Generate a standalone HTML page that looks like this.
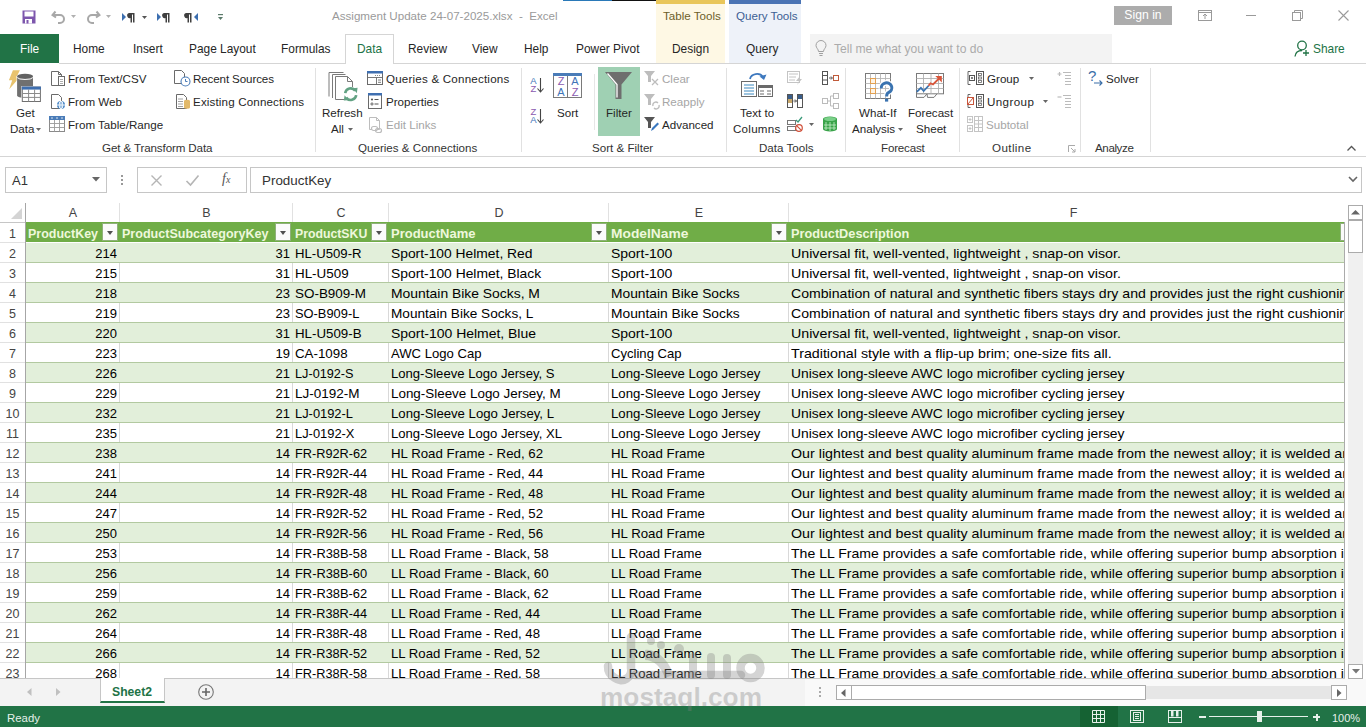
<!DOCTYPE html>
<html><head><meta charset="utf-8">
<style>
*{box-sizing:border-box;margin:0;padding:0}
html,body{width:1366px;height:727px;overflow:hidden;background:#fff;font-family:"Liberation Sans",sans-serif;color:#262626}
.a{position:absolute;white-space:nowrap}
.t{font-size:11.6px;color:#262626;line-height:14px}
.g{color:#a6a6a6}
.tab{position:absolute;top:41px;font-size:11.9px;line-height:16px;color:#262626}
.glabel{position:absolute;top:141px;font-size:11.6px;line-height:14px;color:#333}
.sep{position:absolute;top:68px;width:1px;height:84px;background:#e1e1e1}
svg{position:absolute;overflow:visible}
/* grid */
.colh{position:absolute;top:203px;height:19px;font-size:12.5px;line-height:19px;color:#444;text-align:center}
.rh{position:absolute;left:0;width:25px;height:20px;padding-top:1px;font-size:12.5px;line-height:20px;color:#444;text-align:center;border-bottom:1px solid #e1e1e1}
.cn,.cl{height:19px;font-size:13px;line-height:20px;color:#000;overflow:hidden}
.cn{text-align:right}
.hc{height:19px;font-weight:bold;font-size:12.5px;line-height:20px;color:#eef8dc;overflow:hidden}
.fb{position:absolute;top:1px;width:16px;height:18px;border:1px solid #8fb07a;background:#fbfbfb}
.fb:after{content:"";position:absolute;left:4px;top:7px;border-left:3.5px solid transparent;border-right:3.5px solid transparent;border-top:4px solid #505050}
</style></head><body>
<!-- TITLE BAR -->
<svg style="left:22px;top:10px" width="14" height="14" viewBox="0 0 14 14"><path d="M0.5 0.5h13v13h-13z" fill="#7d56ad"/><rect x="2.5" y="1.5" width="9" height="5" fill="#fff"/><rect x="3" y="9" width="7" height="4.5" fill="#fff"/><rect x="4.5" y="10" width="2" height="3.5" fill="#7d56ad"/></svg>
<svg style="left:51px;top:10px" width="16" height="14" viewBox="0 0 16 14"><path d="M4.5 1.5 L1.5 5 L5 7.5" fill="none" stroke="#a8a8a8" stroke-width="2"/><path d="M2 5 H9 A4 4 0 0 1 9 13 H7" fill="none" stroke="#a8a8a8" stroke-width="2"/></svg>
<svg style="left:71px;top:15px" width="6" height="4"><path d="M0 0H5L2.5 3Z" fill="#b0b0b0"/></svg>
<svg style="left:86px;top:10px" width="16" height="14" viewBox="0 0 16 14"><path d="M10.5 1.5 L13.5 5 L10 7.5" fill="none" stroke="#a8a8a8" stroke-width="2"/><path d="M13 5 H6 A4 4 0 0 0 6 13 H8" fill="none" stroke="#a8a8a8" stroke-width="2"/></svg>
<svg style="left:106px;top:15px" width="6" height="4"><path d="M0 0H5L2.5 3Z" fill="#b0b0b0"/></svg>
<svg style="left:122px;top:12px" width="13" height="11" viewBox="0 0 13 11"><path d="M0 1 L4 5 L0 9Z" fill="#3c6fb0"/><path d="M7 1 H12.5 V10.5 H11 V2.5 H10 V10.5 H8.5 V6 A2.6 2.6 0 0 1 7 1Z" fill="#404040"/></svg>
<svg style="left:142px;top:16px" width="6" height="4"><path d="M0 0H5L2.5 3Z" fill="#555"/></svg>
<svg style="left:157px;top:12px" width="13" height="11" viewBox="0 0 13 11"><path d="M0 1 L4 5 L0 9Z" fill="#3c6fb0"/><path d="M7 1 H12.5 V10.5 H11 V2.5 H10 V10.5 H8.5 V6 A2.6 2.6 0 0 1 7 1Z" fill="#404040"/></svg>
<svg style="left:186px;top:12px" width="13" height="11" viewBox="0 0 13 11"><path d="M0 1 H5.5 V10.5 H4 V2.5 H3 V10.5 H1.5 V6 A2.6 2.6 0 0 1 0 1Z" fill="#404040"/><path d="M12 1 L8 5 L12 9Z" fill="#3c6fb0"/></svg>
<svg style="left:218px;top:13px" width="6" height="9"><rect x="0" y="1" width="5" height="1.2" fill="#5a7a6a"/><path d="M0 4H5L2.5 7Z" fill="#5a7a6a"/></svg>
<div class="a" style="left:332px;top:9px;font-size:11.6px;line-height:14px;color:#9a9a9a">Assigment Update 24-07-2025.xlsx&nbsp; - &nbsp;Excel</div>
<div class="a" style="left:563px;top:0;width:49px;height:1px;background:#2a79b8"></div>
<div class="a" style="left:612px;top:0;width:44px;height:1px;background:#111"></div>
<div class="a" style="left:656px;top:0;width:69px;height:63px;background:#fef8e4"></div>
<div class="a" style="left:656px;top:0;width:69px;height:4px;background:#e9c65a"></div>
<div class="a" style="left:663px;top:9px;font-size:11.6px;line-height:14px;color:#6d5f2a">Table Tools</div>
<div class="a" style="left:729px;top:0;width:72px;height:63px;background:#eef2f9"></div>
<div class="a" style="left:729px;top:0;width:72px;height:4px;background:#4a74b5"></div>
<div class="a" style="left:736px;top:9px;font-size:11.6px;line-height:14px;color:#3d5f94">Query Tools</div>
<div class="a" style="left:1114px;top:6px;width:58px;height:19px;background:#acacac;color:#fff;font-size:12.2px;line-height:19px;text-align:center">Sign in</div>
<svg style="left:1198px;top:10px" width="14" height="11" viewBox="0 0 14 11"><rect x="0.5" y="0.5" width="13" height="10" fill="none" stroke="#9a9a9a"/><rect x="0.5" y="0.5" width="13" height="2" fill="none" stroke="#9a9a9a"/><path d="M7 9V4 M5 6 L7 4 L9 6" fill="none" stroke="#9a9a9a"/></svg>
<div class="a" style="left:1246px;top:15px;width:10px;height:1px;background:#9a9a9a"></div>
<svg style="left:1292px;top:10px" width="11" height="11" viewBox="0 0 11 11"><rect x="0.5" y="2.5" width="8" height="8" fill="none" stroke="#9a9a9a"/><path d="M2.5 2.5V0.5H10.5V8.5H8.5" fill="none" stroke="#9a9a9a"/></svg>
<svg style="left:1338px;top:10px" width="11" height="11" viewBox="0 0 11 11"><path d="M0.5 0.5L10.5 10.5M10.5 0.5L0.5 10.5" stroke="#9a9a9a" stroke-width="1.1"/></svg>
<!-- TABS ROW -->
<div class="a" style="left:0;top:34px;width:59px;height:29px;background:#217346"></div>
<div class="tab" style="left:20px;color:#fff">File</div>
<div class="a" style="left:59px;top:63px;width:1307px;height:1px;background:#d5d5d5"></div>
<div class="a" style="left:345px;top:34px;width:49px;height:30px;background:#fff;border:1px solid #d5d5d5;border-bottom:none"></div>
<div class="tab" style="left:73px">Home</div>
<div class="tab" style="left:133px">Insert</div>
<div class="tab" style="left:189px">Page Layout</div>
<div class="tab" style="left:281px">Formulas</div>
<div class="tab" style="left:357px;color:#217346">Data</div>
<div class="tab" style="left:408px">Review</div>
<div class="tab" style="left:472px">View</div>
<div class="tab" style="left:524px">Help</div>
<div class="tab" style="left:576px">Power Pivot</div>
<div class="tab" style="left:672px">Design</div>
<div class="tab" style="left:746px">Query</div>
<div class="a" style="left:810px;top:34px;width:302px;height:29px;background:#f3f3f3"></div>
<svg style="left:815px;top:40px" width="12" height="17" viewBox="0 0 12 17"><path d="M3.5 11.5 C3.5 9 1 8 1 5.5 A5 5 0 0 1 11 5.5 C11 8 8.5 9 8.5 11.5Z" fill="none" stroke="#a0a0a0"/><path d="M4 13.5H8M4.5 15.5H7.5" stroke="#a0a0a0"/></svg>
<div class="a" style="left:834px;top:41px;font-size:12.1px;line-height:16px;color:#ababab">Tell me what you want to do</div>
<svg style="left:1294px;top:40px" width="16" height="17" viewBox="0 0 16 17"><circle cx="8" cy="5.5" r="4.3" fill="none" stroke="#217346" stroke-width="1.3"/><path d="M1 16.5 C1.5 12 4 10.5 8 10.5" fill="none" stroke="#217346" stroke-width="1.3"/><path d="M12 10V16M9 13H15" stroke="#217346" stroke-width="1.3"/></svg>
<div class="tab" style="left:1313px;color:#217346">Share</div>
<!-- RIBBON -->
<div class="a" style="left:0;top:156px;width:1366px;height:1px;background:#d5d5d5"></div>
<div class="sep" style="left:315px"></div>
<div class="sep" style="left:521px"></div>
<div class="sep" style="left:726px"></div>
<div class="sep" style="left:845px"></div>
<div class="sep" style="left:959px"></div>
<div class="sep" style="left:1080px"></div>
<div class="sep" style="left:1150px"></div>
<div class="a" style="left:594px;top:74px;width:1px;height:56px;background:#e6e6e6"></div>
<!-- Get & Transform -->
<svg style="left:8px;top:70px" width="34" height="33" viewBox="0 0 34 33"><path d="M4.9 0.3 H11.9 L8.3 7.4 H11.5 L1.2 19.2 L4.2 10.2 H0.9Z" fill="#e8c36e"/><path d="M8.6 6.5 V25.5 A8.45 2.9 0 0 0 25.5 25.5 V6.5 A8.45 2.9 0 0 0 8.6 6.5Z" fill="#fff"/><path d="M9.1 6.5 V25.5 A7.95 2.4 0 0 0 25 25.5 V6.5Z" fill="#707070"/><ellipse cx="17.05" cy="6.3" rx="7.95" ry="2.5" fill="#626262"/><path d="M9.3 7.6 A7.9 2.3 0 0 0 24.8 7.6" fill="none" stroke="#fff" stroke-width="1"/><rect x="13.3" y="16.1" width="20.1" height="16.4" fill="#fff"/><rect x="14.3" y="17.1" width="18.1" height="14.4" fill="#fff" stroke="#707070"/><rect x="13.8" y="16.6" width="19.1" height="3" fill="#3f6fb0"/><path d="M14.3 23.5H32.4M14.3 27.4H32.4M20.6 19.5V31.5M26.6 19.5V31.5" stroke="#8a8a8a"/></svg>
<div class="a t" style="left:16px;top:106px">Get</div>
<div class="a t" style="left:10px;top:122px">Data</div>
<svg style="left:36px;top:128px" width="5" height="3"><path d="M0 0H5L2.5 3Z" fill="#666"/></svg>
<svg style="left:51px;top:71px" width="15" height="16" viewBox="0 0 15 16"><path d="M0.5 0.5H7.5L10.5 3.5V14.5H0.5Z" fill="#fff" stroke="#6a6a6a"/><path d="M7.5 0.5V3.5H10.5" fill="none" stroke="#6a6a6a"/><rect x="7.5" y="5.5" width="6" height="9" fill="#fff" stroke="#6a6a6a"/><path d="M9 8.5H12M9 10.5H12M9 12.5H12" stroke="#8a8a8a" stroke-width="0.7"/></svg>
<div class="a t" style="left:68px;top:72px">From Text/CSV</div>
<svg style="left:51px;top:94px" width="15" height="16" viewBox="0 0 15 16"><path d="M0.5 0.5H7.5L10.5 3.5V14.5H0.5Z" fill="#fff" stroke="#6a6a6a"/><circle cx="10" cy="11" r="4" fill="#4d8ac8"/><path d="M6 11H14M10 7V15" stroke="#fff" stroke-width="0.9"/><ellipse cx="10" cy="11" rx="1.8" ry="4" fill="none" stroke="#fff" stroke-width="0.9"/></svg>
<div class="a t" style="left:68px;top:95px">From Web</div>
<svg style="left:49px;top:116px" width="16" height="16" viewBox="0 0 16 16"><rect x="0.5" y="0.5" width="15" height="15" fill="#fff" stroke="#8a8a8a"/><rect x="0" y="0" width="16" height="4" fill="#4a7cb8"/><path d="M2 2H4M7 2H9M12 2H14" stroke="#fff" stroke-width="0.8"/><path d="M0.5 7.5H15.5M0.5 11.5H15.5M5.5 4V15.5M10.5 4V15.5" stroke="#9a9a9a" stroke-width="0.9"/></svg>
<div class="a t" style="left:68px;top:118px">From Table/Range</div>
<svg style="left:174px;top:70px" width="17" height="17" viewBox="0 0 17 17"><path d="M0.5 0.5H7.5L10.5 3.5V13.5H0.5Z" fill="#fff" stroke="#6a6a6a"/><circle cx="11.5" cy="11.5" r="4.5" fill="#fff" stroke="#4a7cb8" stroke-width="1.1"/><path d="M11.5 9V11.5H13.5" fill="none" stroke="#4a7cb8"/></svg>
<div class="a t" style="left:193px;top:72px;letter-spacing:-0.12px">Recent Sources</div>
<svg style="left:176px;top:94px" width="15" height="15" viewBox="0 0 15 15"><path d="M0.5 0.5H7.5L10.5 3.5V14.5H0.5Z" fill="#fff" stroke="#6a6a6a"/><path d="M2 5H7M2 7.5H7M2 10H7M2 12.5H7" stroke="#8a8a8a" stroke-width="0.8"/><path d="M8 7 A3 1.3 0 0 1 14 7 V13.5 A3 1.3 0 0 1 8 13.5Z" fill="#e2b96a"/></svg>
<div class="a t" style="left:193px;top:95px;letter-spacing:0.15px">Existing Connections</div>
<div class="glabel" style="left:102px;letter-spacing:-0.12px">Get &amp; Transform Data</div>
<!-- Queries & Connections -->
<svg style="left:328px;top:72px" width="31" height="30" viewBox="0 0 31 30"><path d="M1 24.5V0.5H15.5" fill="none" stroke="#7a7a7a"/><path d="M4.5 26V2.5H17.5" fill="none" stroke="#7a7a7a"/><path d="M7.5 27.5V4.5H19.5L24.5 9.5V27.5Z" fill="#fff" stroke="#7a7a7a"/><path d="M19.5 4.5V9.5H24.5" fill="none" stroke="#7a7a7a"/><circle cx="22.7" cy="22.2" r="7.5" fill="#fff"/><path d="M17.2 21.2 A5.5 5.5 0 0 1 27.2 18.8" fill="none" stroke="#62a283" stroke-width="2.6"/><path d="M28.2 23.2 A5.5 5.5 0 0 1 18.2 25.6" fill="none" stroke="#62a283" stroke-width="2.6"/><path d="M24.8 16.2L29.6 15.8L28.8 21.2Z" fill="#62a283"/><path d="M20.6 28.2L15.8 28.6L16.6 23.2Z" fill="#62a283"/></svg>
<div class="a t" style="left:322px;top:106px">Refresh</div>
<div class="a t" style="left:331px;top:122px">All</div>
<svg style="left:348px;top:128px" width="5" height="3"><path d="M0 0H5L2.5 3Z" fill="#666"/></svg>
<svg style="left:367px;top:71px" width="16" height="14" viewBox="0 0 16 14"><rect x="0.5" y="0.5" width="15" height="13" fill="#fff" stroke="#6a6a6a"/><rect x="0" y="0" width="16" height="2.5" fill="#3f6fb0"/><path d="M0.5 6.5H15.5M9.5 6.5V13.5" stroke="#6a6a6a" stroke-width="0.9"/><path d="M8 4.5H9M10 4.5H11M12 4.5H13" stroke="#6a6a6a" stroke-width="0.8"/><path d="M11 9H14M11 11.3H14" stroke="#6a6a6a" stroke-width="0.9"/></svg>
<div class="a t" style="left:386px;top:72px;letter-spacing:0.2px">Queries &amp; Connections</div>
<svg style="left:368px;top:93px" width="15" height="16" viewBox="0 0 15 16"><rect x="0.5" y="0.5" width="13" height="15" fill="#fff" stroke="#6a6a6a"/><rect x="0" y="0" width="14" height="2.5" fill="#3f6fb0"/><circle cx="4" cy="6.5" r="1.1" fill="#555"/><circle cx="4" cy="11" r="1.1" fill="none" stroke="#555" stroke-width="0.9"/><path d="M6.5 6.5H10.5M6.5 11H10.5" stroke="#555"/></svg>
<div class="a t" style="left:386px;top:95px">Properties</div>
<svg style="left:369px;top:117px" width="14" height="16" viewBox="0 0 14 16"><path d="M0.5 0.5H7.5L10.5 3.5V12.5H0.5Z" fill="#fff" stroke="#bdbdbd"/><path d="M7.5 0.5V3.5H10.5" fill="none" stroke="#bdbdbd"/><rect x="2.5" y="9.5" width="6" height="4" rx="2" fill="#fff" stroke="#bdbdbd" stroke-width="1.2"/><rect x="6.5" y="11.5" width="6" height="4" rx="2" fill="none" stroke="#bdbdbd" stroke-width="1.2"/></svg>
<div class="a t g" style="left:386px;top:118px">Edit Links</div>
<div class="glabel" style="left:358px">Queries &amp; Connections</div>
<!-- Sort & Filter -->
<div class="a" style="left:529px;top:77px;font-size:9.5px;line-height:8px;color:#3e74b8;width:9px;text-align:center">A<br><span style="color:#8a5ab0">Z</span></div>
<svg style="left:537px;top:78px" width="7" height="15"><path d="M3.5 0V14M0.5 10.5L3.5 14L6.5 10.5" fill="none" stroke="#444" stroke-width="1.1"/></svg>
<div class="a" style="left:529px;top:108px;font-size:9.5px;line-height:8px;color:#8a5ab0;width:9px;text-align:center">Z<br><span style="color:#3e74b8">A</span></div>
<svg style="left:537px;top:109px" width="7" height="15"><path d="M3.5 0V14M0.5 10.5L3.5 14L6.5 10.5" fill="none" stroke="#444" stroke-width="1.1"/></svg>
<svg style="left:553px;top:73px" width="29" height="25" viewBox="0 0 29 25"><rect x="0.5" y="0.5" width="28" height="24" fill="#fff" stroke="#7a7a7a"/><rect x="0" y="0" width="29" height="3" fill="#4a7cb8"/><path d="M14.5 3V24.5" stroke="#7a7a7a"/></svg>
<div class="a" style="left:554px;top:76px;width:14px;font-size:11px;line-height:10.5px;text-align:center;color:#8a5ab0">Z<br><span style="color:#3e74b8">A</span></div>
<div class="a" style="left:568px;top:76px;width:14px;font-size:11px;line-height:10.5px;text-align:center;color:#3e74b8">A<br><span style="color:#8a5ab0">Z</span></div>
<div class="a t" style="left:557px;top:106px">Sort</div>
<div class="a" style="left:598px;top:67px;width:42px;height:69px;background:#9fd0b3"></div>
<svg style="left:605px;top:72px" width="28" height="28" viewBox="0 0 28 28"><path d="M0 0H27L16.5 12.5V27H10.5V12.5Z" fill="#6e6e6e"/><path d="M2.5 1.5L12 12.5V25.5" fill="none" stroke="#fff" stroke-width="1.3"/></svg>
<div class="a t" style="left:606px;top:106px">Filter</div>
<svg style="left:644px;top:71px" width="15" height="15" viewBox="0 0 15 15"><path d="M0 0H11L7 5V11H4V5Z" fill="#bdbdbd"/><path d="M8 8L14 14M14 8L8 14" stroke="#bdbdbd" stroke-width="1.3"/></svg>
<div class="a t g" style="left:662px;top:72px">Clear</div>
<svg style="left:644px;top:94px" width="16" height="15" viewBox="0 0 16 15"><path d="M0 0H11L7 5V11H4V5Z" fill="#bdbdbd"/><path d="M9 12 A3 3 0 0 1 14 9 M15 11 A3 3 0 0 1 10 14" fill="none" stroke="#bdbdbd" stroke-width="1.3"/></svg>
<div class="a t g" style="left:662px;top:95px">Reapply</div>
<svg style="left:644px;top:117px" width="16" height="15" viewBox="0 0 16 15"><path d="M0 0H11L7 5V11H4V5Z" fill="#555"/><path d="M7 14L8 11L13.5 5.5L15 7L9.5 12.5Z" fill="#3a78c0"/></svg>
<div class="a t" style="left:662px;top:118px">Advanced</div>
<div class="glabel" style="left:592px">Sort &amp; Filter</div>
<!-- Data Tools -->
<svg style="left:741px;top:71px" width="32" height="26" viewBox="0 0 32 26"><path d="M9 8 A7 6 0 0 1 22 6" fill="none" stroke="#3d78be" stroke-width="1.8"/><path d="M18.5 5.5L23 9L25.5 3.5Z" fill="#3d78be"/><rect x="0.5" y="10.5" width="15" height="15" fill="#fff" stroke="#6a6a6a"/><path d="M3 14H13M3 17H13M3 20H13M3 23H13" stroke="#3d8ac0" stroke-width="1"/><rect x="17.5" y="14.5" width="14" height="11" fill="#fff" stroke="#6a6a6a"/><rect x="17" y="14" width="15" height="3" fill="#6a6a6a"/><path d="M19 20H23M26 20H30M19 23H23M26 23H30" stroke="#6a6a6a"/></svg>
<div class="a t" style="left:740px;top:106px">Text to</div>
<div class="a t" style="left:733px;top:122px;letter-spacing:0.25px">Columns</div>
<svg style="left:787px;top:71px" width="16" height="14" viewBox="0 0 16 14"><rect x="0.5" y="0.5" width="12" height="11" fill="#fff" stroke="#c4c4c4"/><path d="M2 3H11M2 6H9M2 9H8" stroke="#c4c4c4"/><path d="M13 5L9 10H12L10 14L15 8H12Z" fill="#c4c4c4"/></svg>
<svg style="left:787px;top:94px" width="16" height="14" viewBox="0 0 16 14"><rect x="0.5" y="0.5" width="5" height="13" fill="#fff" stroke="#555"/><rect x="1" y="1" width="4" height="4" fill="#3a5e8a"/><rect x="1" y="5" width="4" height="4" fill="#c9a86a"/><rect x="10.5" y="0.5" width="5" height="13" fill="#fff" stroke="#555"/><rect x="11" y="1" width="4" height="4" fill="#3a5e8a"/><path d="M6.5 7H9.5M8 5.5L9.5 7L8 8.5" fill="none" stroke="#555"/></svg>
<svg style="left:787px;top:116px" width="16" height="16" viewBox="0 0 16 16"><rect x="0.5" y="4.5" width="8" height="4" fill="#fff" stroke="#777"/><rect x="0.5" y="10.5" width="8" height="4" fill="#fff" stroke="#777"/><path d="M9 4L11 6L15 1" fill="none" stroke="#3a9a7a" stroke-width="1.3"/><circle cx="12" cy="12" r="3.3" fill="#fff" stroke="#d0503a" stroke-width="1.2"/><path d="M9.8 9.8L14.2 14.2" stroke="#d0503a" stroke-width="1.2"/></svg>
<svg style="left:809px;top:123px" width="5" height="3"><path d="M0 0H5L2.5 3Z" fill="#666"/></svg>
<svg style="left:822px;top:71px" width="17" height="14" viewBox="0 0 17 14"><rect x="0.5" y="0.5" width="5" height="13" fill="#fff" stroke="#555"/><path d="M0.5 4.5H5.5M0.5 9H5.5" stroke="#555"/><path d="M7 7H10M9 5.5L10.5 7L9 8.5" fill="none" stroke="#555"/><rect x="11.5" y="4.5" width="5" height="5" fill="#fff" stroke="#c05a3a"/></svg>
<svg style="left:822px;top:93px" width="17" height="16" viewBox="0 0 17 16"><rect x="0.5" y="5.5" width="5" height="5" fill="#fff" stroke="#bbb"/><rect x="11.5" y="0.5" width="5" height="5" fill="#fff" stroke="#bbb"/><rect x="11.5" y="10.5" width="5" height="5" fill="#fff" stroke="#bbb"/><path d="M5.5 8H8.5V3H11.5M8.5 8V13H11.5" fill="none" stroke="#bbb"/></svg>
<svg style="left:822px;top:116px" width="16" height="16" viewBox="0 0 16 16"><path d="M1 3 A7 2.5 0 0 1 15 3 V13 A7 2.5 0 0 1 1 13Z" fill="#3aa34a"/><ellipse cx="8" cy="3" rx="6" ry="2" fill="#7bd08a"/><path d="M4 6V14M8 6V15M12 6V14M2 9H14M2 12H14" stroke="#c8f0cc" stroke-width="0.8"/></svg>
<div class="glabel" style="left:759px">Data Tools</div>
<!-- Forecast -->
<svg style="left:865px;top:73px" width="30" height="30" viewBox="0 0 30 30"><rect x="0.5" y="0.5" width="25" height="25" fill="#fff" stroke="#7a7a7a"/><path d="M0.5 5.5H25.5M0.5 10.5H25.5M0.5 15.5H25.5M0.5 20.5H25.5M5.5 0.5V25.5M10.5 0.5V25.5M15.5 0.5V25.5M20.5 0.5V25.5" stroke="#b5b5b5" stroke-width="0.9"/><rect x="5.5" y="5.5" width="5" height="5" fill="#fdf3e4" stroke="#e3a050"/><rect x="5.5" y="15.5" width="5" height="5" fill="#fdf3e4" stroke="#e3a050"/><path d="M16.3 15.5 A5.3 5 0 1 1 23.5 19.5 Q21.6 20.5 21.6 23.5" fill="none" stroke="#fff" stroke-width="5.5"/><path d="M16.3 15.5 A5.3 5 0 1 1 23.5 19.5 Q21.6 20.5 21.6 23.5" fill="none" stroke="#3a73b0" stroke-width="3"/><rect x="20" y="25.6" width="3.2" height="3" fill="#3a73b0"/></svg>
<div class="a t" style="left:859px;top:106px">What-If</div>
<div class="a t" style="left:852px;top:122px">Analysis</div>
<svg style="left:898px;top:128px" width="5" height="3"><path d="M0 0H5L2.5 3Z" fill="#666"/></svg>
<svg style="left:916px;top:73px" width="29" height="25" viewBox="0 0 29 25"><path d="M0.5 20.8V24.4H8L11 20.8M11 20.8L11.5 24.4H18L21 20.8" fill="#fff" stroke="#7a7a7a"/><rect x="0.5" y="0.5" width="27" height="20.3" fill="#fff" stroke="#7a7a7a"/><path d="M0.5 5.5H27.5M0.5 10.5H27.5M0.5 15.5H27.5M7.5 0.5V20.8M15 0.5V20.8M22.5 0.5V20.8" stroke="#b0b0b0" stroke-width="0.9"/><path d="M0.8 18.8L4.9 14.8L7.7 18L12.8 12.5" fill="none" stroke="#3a73b0" stroke-width="1.8"/><path d="M12.5 12.8L14.5 10.3L17 11.5L23.5 5" fill="none" stroke="#d9553a" stroke-width="1.8"/><path d="M19.3 3L25.8 3L25.8 9.5Z" fill="#d9553a"/></svg>
<div class="a t" style="left:908px;top:106px">Forecast</div>
<div class="a t" style="left:916px;top:122px">Sheet</div>
<div class="glabel" style="left:881px;letter-spacing:-0.2px">Forecast</div>
<!-- Outline -->
<svg style="left:967px;top:71px" width="17" height="14" viewBox="0 0 17 14"><path d="M3.5 0.5H1V13.5H3.5" fill="none" stroke="#666"/><rect x="2.5" y="4.5" width="5" height="5" fill="#fff" stroke="#555"/><path d="M4 7H6M5 6V8" stroke="#555"/><rect x="9.5" y="0.5" width="7" height="13" fill="#fff" stroke="#555"/><rect x="11.5" y="2.5" width="3" height="2" fill="none" stroke="#666" stroke-width="0.8"/><rect x="11.5" y="6" width="3" height="2" fill="none" stroke="#666" stroke-width="0.8"/><rect x="11.5" y="9.5" width="3" height="2" fill="none" stroke="#666" stroke-width="0.8"/></svg>
<div class="a t" style="left:987px;top:72px">Group</div>
<svg style="left:1029px;top:77px" width="5" height="3"><path d="M0 0H5L2.5 3Z" fill="#666"/></svg>
<svg style="left:967px;top:94px" width="17" height="14" viewBox="0 0 17 14"><path d="M3.5 0.5H1V13.5H3.5" fill="none" stroke="#666"/><rect x="0.5" y="3.5" width="6" height="7" fill="#fff" stroke="#c8553a"/><path d="M1 10L6 4" stroke="#c8553a"/><rect x="9.5" y="0.5" width="7" height="13" fill="#fff" stroke="#555"/><rect x="11.5" y="2.5" width="3" height="2" fill="none" stroke="#666" stroke-width="0.8"/><rect x="11.5" y="6" width="3" height="2" fill="none" stroke="#666" stroke-width="0.8"/><rect x="11.5" y="9.5" width="3" height="2" fill="none" stroke="#666" stroke-width="0.8"/></svg>
<div class="a t" style="left:987px;top:95px;letter-spacing:0.4px">Ungroup</div>
<svg style="left:1043px;top:100px" width="5" height="3"><path d="M0 0H5L2.5 3Z" fill="#666"/></svg>
<svg style="left:967px;top:116px" width="16" height="16" viewBox="0 0 16 16"><rect x="0.5" y="0.5" width="5" height="6" fill="#fff" stroke="#c4c4c4"/><rect x="0.5" y="9.5" width="5" height="6" fill="#fff" stroke="#c4c4c4"/><path d="M1.5 3.5H4.5M3 2V5M1.5 12.5H4.5M3 11V14" stroke="#c4c4c4"/><rect x="7.5" y="0.5" width="8" height="15" fill="#fff" stroke="#c4c4c4"/><path d="M7.5 4.5H15.5M7.5 8H15.5M7.5 11.5H15.5M11.5 0.5V15.5" stroke="#c4c4c4"/></svg>
<div class="a t g" style="left:986px;top:118px">Subtotal</div>
<svg style="left:1057px;top:71px" width="15" height="14" viewBox="0 0 15 14"><path d="M0.5 3H4.5M2.5 1V5" stroke="#bbb" stroke-width="1.2"/><path d="M6 1.5H14M8 4.5H14M8 7.5H14M8 10.5H14M8 13.5H14" stroke="#bbb"/></svg>
<svg style="left:1057px;top:94px" width="15" height="14" viewBox="0 0 15 14"><path d="M0.5 3H4.5" stroke="#bbb" stroke-width="1.2"/><path d="M6 1.5H14M8 4.5H14M8 7.5H14M8 10.5H14M8 13.5H14" stroke="#bbb"/></svg>
<div class="glabel" style="left:992px;letter-spacing:0.4px">Outline</div>
<svg style="left:1068px;top:145px" width="8" height="8" viewBox="0 0 8 8"><path d="M0.5 7V0.5H7" fill="none" stroke="#aaa"/><path d="M3 3L7 7M7 4V7H4" fill="none" stroke="#aaa"/></svg>
<!-- Analyze -->
<div class="a" style="left:1088px;top:68px;font-size:15px;line-height:16px;color:#3a6ea8">?</div>
<svg style="left:1094px;top:80px" width="9" height="6"><path d="M0 3H8M5.5 0.5L8 3L5.5 5.5" fill="none" stroke="#3a6ea8" stroke-width="1.1"/></svg>
<div class="a t" style="left:1106px;top:72px">Solver</div>
<div class="glabel" style="left:1095px;letter-spacing:-0.4px">Analyze</div>
<svg style="left:1347px;top:145px" width="9" height="6"><path d="M0.5 5.5L4.5 1.5L8.5 5.5" fill="none" stroke="#555" stroke-width="1.3"/></svg>
<!-- FORMULA BAR -->
<div class="a" style="left:5px;top:167px;width:102px;height:26px;border:1px solid #c6c6c6;background:#fff"></div>
<div class="a" style="left:12px;top:173px;font-size:13px;line-height:16px;color:#333">A1</div>
<svg style="left:92px;top:177px" width="8" height="5"><path d="M0 0H8L4 4.5Z" fill="#666"/></svg>
<div class="a" style="left:121px;top:175px;width:2px;height:2px;background:#999"></div>
<div class="a" style="left:121px;top:179px;width:2px;height:2px;background:#999"></div>
<div class="a" style="left:121px;top:183px;width:2px;height:2px;background:#999"></div>
<div class="a" style="left:137px;top:167px;width:110px;height:26px;border:1px solid #c6c6c6;background:#fff"></div>
<svg style="left:151px;top:175px" width="11" height="11"><path d="M0.5 0.5L10.5 10.5M10.5 0.5L0.5 10.5" stroke="#b5b5b5" stroke-width="1.4"/></svg>
<svg style="left:186px;top:175px" width="13" height="11"><path d="M0.5 6L4.5 10L12.5 0.5" fill="none" stroke="#b5b5b5" stroke-width="1.6"/></svg>
<div class="a" style="left:222px;top:171px;font-family:'Liberation Serif',serif;font-style:italic;font-size:14px;line-height:16px;color:#555">f<span style="font-size:10px">x</span></div>
<div class="a" style="left:250px;top:167px;width:1112px;height:26px;border:1px solid #c6c6c6;background:#fff"></div>
<div class="a" style="left:262px;top:173px;font-size:13.4px;line-height:16px;color:#333">ProductKey</div>
<svg style="left:1348px;top:176px" width="10" height="7"><path d="M1 1L5 5L9 1" fill="none" stroke="#666" stroke-width="1.6"/></svg>
<!-- VERTICAL SCROLLBAR -->
<div class="a" style="left:1344px;top:222px;width:1px;height:457px;background:#ababab"></div>
<div class="a" style="left:1348px;top:252px;width:15px;height:412px;background:#f0f0f0"></div>
<div class="a" style="left:1348px;top:205px;width:15px;height:15px;border:1px solid #ababab;background:#fff"></div>
<svg style="left:1351px;top:210px" width="9" height="5"><path d="M0 4.5H9L4.5 0Z" fill="#666"/></svg>
<div class="a" style="left:1348px;top:220px;width:15px;height:33px;border:1px solid #ababab;background:#fff"></div>
<div class="a" style="left:1348px;top:664px;width:15px;height:15px;border:1px solid #ababab;background:#fff"></div>
<svg style="left:1352px;top:669px" width="8" height="5"><path d="M0 0H8L4 4.5Z" fill="#777"/></svg>
<!-- SHEET TAB BAR -->
<div class="a" style="left:0;top:678px;width:1345px;height:1px;background:#c6c6c6"></div>
<div class="a" style="left:805px;top:679px;width:561px;height:27px;background:#f9f9f9"></div>
<div class="a" style="left:0;top:679px;width:805px;height:27px;background:#f3f3f3"></div>
<svg style="left:27px;top:688px" width="5" height="8"><path d="M4.5 0V8L0 4Z" fill="#c0c0c0"/></svg>
<svg style="left:56px;top:688px" width="5" height="8"><path d="M0 0V8L4.5 4Z" fill="#c0c0c0"/></svg>
<div class="a" style="left:100px;top:678px;width:65px;height:25px;background:#fff;border-left:1px solid #c6c6c6;border-right:1px solid #c6c6c6;border-bottom:2px solid #217346"></div>
<div class="a" style="left:112px;top:684px;font-size:12.2px;line-height:16px;font-weight:bold;color:#217346">Sheet2</div>
<svg style="left:198px;top:684px" width="16" height="16" viewBox="0 0 16 16"><circle cx="8" cy="8" r="7.3" fill="none" stroke="#777" stroke-width="1.1"/><path d="M4 8H12M8 4V12" stroke="#666" stroke-width="1.6"/></svg>
<div class="a" style="left:819px;top:687px;width:2px;height:2px;background:#aaa"></div>
<div class="a" style="left:819px;top:691px;width:2px;height:2px;background:#aaa"></div>
<div class="a" style="left:819px;top:695px;width:2px;height:2px;background:#aaa"></div>
<div class="a" style="left:837px;top:686px;width:509px;height:13px;background:#e6e6e6"></div>
<div class="a" style="left:836px;top:685px;width:16px;height:15px;background:#fff;border:1px solid #ababab"></div>
<svg style="left:841px;top:689px" width="5" height="8"><path d="M4.5 0V8L0 4Z" fill="#666"/></svg>
<div class="a" style="left:851px;top:685px;width:295px;height:15px;background:#fff;border:1px solid #ababab"></div>
<div class="a" style="left:1331px;top:685px;width:16px;height:15px;background:#fff;border:1px solid #ababab"></div>
<svg style="left:1337px;top:689px" width="5" height="8"><path d="M0 0V8L4.5 4Z" fill="#666"/></svg>
<!-- STATUS BAR -->
<div class="a" style="left:0;top:706px;width:1366px;height:21px;background:#217346"></div>
<div class="a" style="left:7px;top:710px;font-size:11.4px;line-height:16px;color:#e6f0ea">Ready</div>
<div class="a" style="left:1080px;top:706px;width:38px;height:21px;background:#156233"></div>
<svg style="left:1092px;top:710px" width="13" height="13" viewBox="0 0 13 13"><path d="M0.5 0.5H12.5V12.5H0.5Z M0.5 4.5H12.5M0.5 8.5H12.5M4.5 0.5V12.5M8.5 0.5V12.5" fill="none" stroke="#e6f0ea"/></svg>
<svg style="left:1130px;top:710px" width="14" height="13" viewBox="0 0 14 13"><rect x="0.5" y="0.5" width="13" height="12" fill="none" stroke="#e6f0ea"/><rect x="3.5" y="2.5" width="7" height="8" fill="none" stroke="#e6f0ea"/><path d="M5 4.5H9M5 6.5H9M5 8.5H9" stroke="#e6f0ea"/></svg>
<svg style="left:1168px;top:710px" width="14" height="13" viewBox="0 0 14 13"><rect x="0.5" y="0.5" width="13" height="12" fill="none" stroke="#e6f0ea"/><path d="M0.5 7.5H13.5" stroke="#e6f0ea"/><rect x="3" y="0.5" width="2.5" height="6" fill="#e6f0ea"/><rect x="8" y="0.5" width="2.5" height="6" fill="#e6f0ea"/></svg>
<div class="a" style="left:1199px;top:716px;width:7px;height:2px;background:#e6f0ea"></div>
<div class="a" style="left:1209px;top:716px;width:99px;height:1px;background:#e6f0ea"></div>
<div class="a" style="left:1257px;top:711px;width:5px;height:11px;background:#e6f0ea"></div>
<div class="a" style="left:1313px;top:716px;width:7px;height:2px;background:#e6f0ea"></div>
<div class="a" style="left:1315.5px;top:713.5px;width:2px;height:7px;background:#e6f0ea"></div>
<div class="a" style="left:1332px;top:710px;font-size:11px;line-height:16px;color:#e6f0ea">100%</div>
<div class="a" id="grid" style="left:0;top:203px;width:1344px;height:475px;overflow:hidden">
<div class="a" style="left:0;top:0;width:1344px;height:20px;background:#fff;border-bottom:1px solid #c6c6c6"></div>
<svg style="left:0;top:0" width="26" height="20"><path d="M11 16 L22 16 L22 5 Z" fill="#d4d4d4"/></svg>
<div class="a" style="left:25px;top:0;width:1px;height:475px;background:#a6a6a6"></div>
<div class="colh" style="left:26px;width:94px;top:1px">A</div>
<div class="a" style="left:119px;top:0;width:1px;height:19px;background:#e1e1e1"></div>
<div class="colh" style="left:120px;width:173px;top:1px">B</div>
<div class="a" style="left:292px;top:0;width:1px;height:19px;background:#e1e1e1"></div>
<div class="colh" style="left:293px;width:96px;top:1px">C</div>
<div class="a" style="left:388px;top:0;width:1px;height:19px;background:#e1e1e1"></div>
<div class="colh" style="left:389px;width:220px;top:1px">D</div>
<div class="a" style="left:608px;top:0;width:1px;height:19px;background:#e1e1e1"></div>
<div class="colh" style="left:609px;width:180px;top:1px">E</div>
<div class="a" style="left:788px;top:0;width:1px;height:19px;background:#e1e1e1"></div>
<div class="colh" style="left:789px;width:569px;top:1px">F</div>
<div class="a" style="left:1357px;top:0;width:1px;height:19px;background:#e1e1e1"></div>
<div class="rh" style="top:20px">1</div>
<div class="a" style="left:26px;top:19px;width:1318px;height:20px;background:#70ad47"></div>
<div class="a hc" style="left:28px;top:21px;width:74px"><span style="display:inline-block;transform-origin:0 0;transform:scaleX(0.998)">ProductKey</span></div>
<div class="fb" style="left:102px;top:20px"></div>
<div class="a hc" style="left:122px;top:21px;width:153px"><span style="display:inline-block;transform-origin:0 0;transform:scaleX(1.004)">ProductSubcategoryKey</span></div>
<div class="fb" style="left:275px;top:20px"></div>
<div class="a hc" style="left:295px;top:21px;width:76px"><span style="display:inline-block;transform-origin:0 0;transform:scaleX(0.982)">ProductSKU</span></div>
<div class="fb" style="left:371px;top:20px"></div>
<div class="a hc" style="left:391px;top:21px;width:200px"><span style="display:inline-block;transform-origin:0 0;transform:scaleX(1.039)">ProductName</span></div>
<div class="fb" style="left:591px;top:20px"></div>
<div class="a hc" style="left:611px;top:21px;width:160px"><span style="display:inline-block;transform-origin:0 0;transform:scaleX(1.102)">ModelName</span></div>
<div class="fb" style="left:771px;top:20px"></div>
<div class="a hc" style="left:791px;top:21px;width:549px"><span style="display:inline-block;transform-origin:0 0;transform:scaleX(1.019)">ProductDescription</span></div>
<div class="fb" style="left:1340px;top:20px"></div>
<div class="rh" style="top:40px">2</div>
<div class="a" style="left:26px;top:40px;width:1318px;height:20px;background:#e2efda;border-bottom:1px solid #b2c9a0"></div>
<div class="a cn" style="left:26px;top:41px;width:91px">214</div>
<div class="a cn" style="left:120px;top:41px;width:170px">31</div>
<div class="a cl" style="left:295px;top:41px;width:93px"><span style="display:inline-block;transform-origin:0 0;transform:scaleX(1.012)">HL-U509-R</span></div>
<div class="a cl" style="left:391px;top:41px;width:217px"><span style="display:inline-block;transform-origin:0 0;transform:scaleX(1.064)">Sport-100 Helmet, Red</span></div>
<div class="a cl" style="left:611px;top:41px;width:177px"><span style="display:inline-block;transform-origin:0 0;transform:scaleX(1.075)">Sport-100</span></div>
<div class="a cl" style="left:791px;top:41px;width:553px"><span style="display:inline-block;transform-origin:0 0;transform:scaleX(1.095)">Universal fit, well-vented, lightweight , snap-on visor.</span></div>
<div class="rh" style="top:60px">3</div>
<div class="a" style="left:26px;top:60px;width:1318px;height:20px;background:#fff;border-bottom:1px solid #b2c9a0"></div>
<div class="a" style="left:119px;top:60px;width:1px;height:19px;background:#d9d9d9"></div>
<div class="a" style="left:292px;top:60px;width:1px;height:19px;background:#d9d9d9"></div>
<div class="a" style="left:388px;top:60px;width:1px;height:19px;background:#d9d9d9"></div>
<div class="a" style="left:608px;top:60px;width:1px;height:19px;background:#d9d9d9"></div>
<div class="a" style="left:788px;top:60px;width:1px;height:19px;background:#d9d9d9"></div>
<div class="a cn" style="left:26px;top:61px;width:91px">215</div>
<div class="a cn" style="left:120px;top:61px;width:170px">31</div>
<div class="a cl" style="left:295px;top:61px;width:93px"><span style="display:inline-block;transform-origin:0 0;transform:scaleX(1.030)">HL-U509</span></div>
<div class="a cl" style="left:391px;top:61px;width:217px"><span style="display:inline-block;transform-origin:0 0;transform:scaleX(1.065)">Sport-100 Helmet, Black</span></div>
<div class="a cl" style="left:611px;top:61px;width:177px"><span style="display:inline-block;transform-origin:0 0;transform:scaleX(1.075)">Sport-100</span></div>
<div class="a cl" style="left:791px;top:61px;width:553px"><span style="display:inline-block;transform-origin:0 0;transform:scaleX(1.095)">Universal fit, well-vented, lightweight , snap-on visor.</span></div>
<div class="rh" style="top:80px">4</div>
<div class="a" style="left:26px;top:80px;width:1318px;height:20px;background:#e2efda;border-bottom:1px solid #b2c9a0"></div>
<div class="a cn" style="left:26px;top:81px;width:91px">218</div>
<div class="a cn" style="left:120px;top:81px;width:170px">23</div>
<div class="a cl" style="left:295px;top:81px;width:93px"><span style="display:inline-block;transform-origin:0 0;transform:scaleX(1.034)">SO-B909-M</span></div>
<div class="a cl" style="left:391px;top:81px;width:217px"><span style="display:inline-block;transform-origin:0 0;transform:scaleX(1.068)">Mountain Bike Socks, M</span></div>
<div class="a cl" style="left:611px;top:81px;width:177px"><span style="display:inline-block;transform-origin:0 0;transform:scaleX(1.060)">Mountain Bike Socks</span></div>
<div class="a cl" style="left:791px;top:81px;width:553px"><span style="display:inline-block;transform-origin:0 0;transform:scaleX(1.084)">Combination of natural and synthetic fibers stays dry and provides just the right cushioning.</span></div>
<div class="rh" style="top:100px">5</div>
<div class="a" style="left:26px;top:100px;width:1318px;height:20px;background:#fff;border-bottom:1px solid #b2c9a0"></div>
<div class="a" style="left:119px;top:100px;width:1px;height:19px;background:#d9d9d9"></div>
<div class="a" style="left:292px;top:100px;width:1px;height:19px;background:#d9d9d9"></div>
<div class="a" style="left:388px;top:100px;width:1px;height:19px;background:#d9d9d9"></div>
<div class="a" style="left:608px;top:100px;width:1px;height:19px;background:#d9d9d9"></div>
<div class="a" style="left:788px;top:100px;width:1px;height:19px;background:#d9d9d9"></div>
<div class="a cn" style="left:26px;top:101px;width:91px">219</div>
<div class="a cn" style="left:120px;top:101px;width:170px">23</div>
<div class="a cl" style="left:295px;top:101px;width:93px"><span style="display:inline-block;transform-origin:0 0;transform:scaleX(0.989)">SO-B909-L</span></div>
<div class="a cl" style="left:391px;top:101px;width:217px"><span style="display:inline-block;transform-origin:0 0;transform:scaleX(1.048)">Mountain Bike Socks, L</span></div>
<div class="a cl" style="left:611px;top:101px;width:177px"><span style="display:inline-block;transform-origin:0 0;transform:scaleX(1.060)">Mountain Bike Socks</span></div>
<div class="a cl" style="left:791px;top:101px;width:553px"><span style="display:inline-block;transform-origin:0 0;transform:scaleX(1.084)">Combination of natural and synthetic fibers stays dry and provides just the right cushioning.</span></div>
<div class="rh" style="top:120px">6</div>
<div class="a" style="left:26px;top:120px;width:1318px;height:20px;background:#e2efda;border-bottom:1px solid #b2c9a0"></div>
<div class="a cn" style="left:26px;top:121px;width:91px">220</div>
<div class="a cn" style="left:120px;top:121px;width:170px">31</div>
<div class="a cl" style="left:295px;top:121px;width:93px"><span style="display:inline-block;transform-origin:0 0;transform:scaleX(1.023)">HL-U509-B</span></div>
<div class="a cl" style="left:391px;top:121px;width:217px"><span style="display:inline-block;transform-origin:0 0;transform:scaleX(1.073)">Sport-100 Helmet, Blue</span></div>
<div class="a cl" style="left:611px;top:121px;width:177px"><span style="display:inline-block;transform-origin:0 0;transform:scaleX(1.075)">Sport-100</span></div>
<div class="a cl" style="left:791px;top:121px;width:553px"><span style="display:inline-block;transform-origin:0 0;transform:scaleX(1.095)">Universal fit, well-vented, lightweight , snap-on visor.</span></div>
<div class="rh" style="top:140px">7</div>
<div class="a" style="left:26px;top:140px;width:1318px;height:20px;background:#fff;border-bottom:1px solid #b2c9a0"></div>
<div class="a" style="left:119px;top:140px;width:1px;height:19px;background:#d9d9d9"></div>
<div class="a" style="left:292px;top:140px;width:1px;height:19px;background:#d9d9d9"></div>
<div class="a" style="left:388px;top:140px;width:1px;height:19px;background:#d9d9d9"></div>
<div class="a" style="left:608px;top:140px;width:1px;height:19px;background:#d9d9d9"></div>
<div class="a" style="left:788px;top:140px;width:1px;height:19px;background:#d9d9d9"></div>
<div class="a cn" style="left:26px;top:141px;width:91px">223</div>
<div class="a cn" style="left:120px;top:141px;width:170px">19</div>
<div class="a cl" style="left:295px;top:141px;width:93px"><span style="display:inline-block;transform-origin:0 0;transform:scaleX(1.025)">CA-1098</span></div>
<div class="a cl" style="left:391px;top:141px;width:217px"><span style="display:inline-block;transform-origin:0 0;transform:scaleX(1.008)">AWC Logo Cap</span></div>
<div class="a cl" style="left:611px;top:141px;width:177px"><span style="display:inline-block;transform-origin:0 0;transform:scaleX(1.007)">Cycling Cap</span></div>
<div class="a cl" style="left:791px;top:141px;width:553px"><span style="display:inline-block;transform-origin:0 0;transform:scaleX(1.095)">Traditional style with a flip-up brim; one-size fits all.</span></div>
<div class="rh" style="top:160px">8</div>
<div class="a" style="left:26px;top:160px;width:1318px;height:20px;background:#e2efda;border-bottom:1px solid #b2c9a0"></div>
<div class="a cn" style="left:26px;top:161px;width:91px">226</div>
<div class="a cn" style="left:120px;top:161px;width:170px">21</div>
<div class="a cl" style="left:295px;top:161px;width:93px"><span style="display:inline-block;transform-origin:0 0;transform:scaleX(0.976)">LJ-0192-S</span></div>
<div class="a cl" style="left:391px;top:161px;width:217px"><span style="display:inline-block;transform-origin:0 0;transform:scaleX(1.007)">Long-Sleeve Logo Jersey, S</span></div>
<div class="a cl" style="left:611px;top:161px;width:177px"><span style="display:inline-block;transform-origin:0 0;transform:scaleX(1.013)">Long-Sleeve Logo Jersey</span></div>
<div class="a cl" style="left:791px;top:161px;width:553px"><span style="display:inline-block;transform-origin:0 0;transform:scaleX(1.065)">Unisex long-sleeve AWC logo microfiber cycling jersey</span></div>
<div class="rh" style="top:180px">9</div>
<div class="a" style="left:26px;top:180px;width:1318px;height:20px;background:#fff;border-bottom:1px solid #b2c9a0"></div>
<div class="a" style="left:119px;top:180px;width:1px;height:19px;background:#d9d9d9"></div>
<div class="a" style="left:292px;top:180px;width:1px;height:19px;background:#d9d9d9"></div>
<div class="a" style="left:388px;top:180px;width:1px;height:19px;background:#d9d9d9"></div>
<div class="a" style="left:608px;top:180px;width:1px;height:19px;background:#d9d9d9"></div>
<div class="a" style="left:788px;top:180px;width:1px;height:19px;background:#d9d9d9"></div>
<div class="a cn" style="left:26px;top:181px;width:91px">229</div>
<div class="a cn" style="left:120px;top:181px;width:170px">21</div>
<div class="a cl" style="left:295px;top:181px;width:93px"><span style="display:inline-block;transform-origin:0 0;transform:scaleX(1.039)">LJ-0192-M</span></div>
<div class="a cl" style="left:391px;top:181px;width:217px"><span style="display:inline-block;transform-origin:0 0;transform:scaleX(1.031)">Long-Sleeve Logo Jersey, M</span></div>
<div class="a cl" style="left:611px;top:181px;width:177px"><span style="display:inline-block;transform-origin:0 0;transform:scaleX(1.013)">Long-Sleeve Logo Jersey</span></div>
<div class="a cl" style="left:791px;top:181px;width:553px"><span style="display:inline-block;transform-origin:0 0;transform:scaleX(1.065)">Unisex long-sleeve AWC logo microfiber cycling jersey</span></div>
<div class="rh" style="top:200px">10</div>
<div class="a" style="left:26px;top:200px;width:1318px;height:20px;background:#e2efda;border-bottom:1px solid #b2c9a0"></div>
<div class="a cn" style="left:26px;top:201px;width:91px">232</div>
<div class="a cn" style="left:120px;top:201px;width:170px">21</div>
<div class="a cl" style="left:295px;top:201px;width:93px"><span style="display:inline-block;transform-origin:0 0;transform:scaleX(0.990)">LJ-0192-L</span></div>
<div class="a cl" style="left:391px;top:201px;width:217px"><span style="display:inline-block;transform-origin:0 0;transform:scaleX(1.013)">Long-Sleeve Logo Jersey, L</span></div>
<div class="a cl" style="left:611px;top:201px;width:177px"><span style="display:inline-block;transform-origin:0 0;transform:scaleX(1.013)">Long-Sleeve Logo Jersey</span></div>
<div class="a cl" style="left:791px;top:201px;width:553px"><span style="display:inline-block;transform-origin:0 0;transform:scaleX(1.065)">Unisex long-sleeve AWC logo microfiber cycling jersey</span></div>
<div class="rh" style="top:220px">11</div>
<div class="a" style="left:26px;top:220px;width:1318px;height:20px;background:#fff;border-bottom:1px solid #b2c9a0"></div>
<div class="a" style="left:119px;top:220px;width:1px;height:19px;background:#d9d9d9"></div>
<div class="a" style="left:292px;top:220px;width:1px;height:19px;background:#d9d9d9"></div>
<div class="a" style="left:388px;top:220px;width:1px;height:19px;background:#d9d9d9"></div>
<div class="a" style="left:608px;top:220px;width:1px;height:19px;background:#d9d9d9"></div>
<div class="a" style="left:788px;top:220px;width:1px;height:19px;background:#d9d9d9"></div>
<div class="a cn" style="left:26px;top:221px;width:91px">235</div>
<div class="a cn" style="left:120px;top:221px;width:170px">21</div>
<div class="a cl" style="left:295px;top:221px;width:93px"><span style="display:inline-block;transform-origin:0 0;transform:scaleX(0.991)">LJ-0192-X</span></div>
<div class="a cl" style="left:391px;top:221px;width:217px"><span style="display:inline-block;transform-origin:0 0;transform:scaleX(1.008)">Long-Sleeve Logo Jersey, XL</span></div>
<div class="a cl" style="left:611px;top:221px;width:177px"><span style="display:inline-block;transform-origin:0 0;transform:scaleX(1.013)">Long-Sleeve Logo Jersey</span></div>
<div class="a cl" style="left:791px;top:221px;width:553px"><span style="display:inline-block;transform-origin:0 0;transform:scaleX(1.065)">Unisex long-sleeve AWC logo microfiber cycling jersey</span></div>
<div class="rh" style="top:240px">12</div>
<div class="a" style="left:26px;top:240px;width:1318px;height:20px;background:#e2efda;border-bottom:1px solid #b2c9a0"></div>
<div class="a cn" style="left:26px;top:241px;width:91px">238</div>
<div class="a cn" style="left:120px;top:241px;width:170px">14</div>
<div class="a cl" style="left:295px;top:241px;width:93px"><span style="display:inline-block;transform-origin:0 0;transform:scaleX(0.979)">FR-R92R-62</span></div>
<div class="a cl" style="left:391px;top:241px;width:217px"><span style="display:inline-block;transform-origin:0 0;transform:scaleX(1.020)">HL Road Frame - Red, 62</span></div>
<div class="a cl" style="left:611px;top:241px;width:177px"><span style="display:inline-block;transform-origin:0 0;transform:scaleX(1.020)">HL Road Frame</span></div>
<div class="a cl" style="left:791px;top:241px;width:553px"><span style="display:inline-block;transform-origin:0 0;transform:scaleX(1.096)">Our lightest and best quality aluminum frame made from the newest alloy; it is welded and heat-treated for strength.</span></div>
<div class="rh" style="top:260px">13</div>
<div class="a" style="left:26px;top:260px;width:1318px;height:20px;background:#fff;border-bottom:1px solid #b2c9a0"></div>
<div class="a" style="left:119px;top:260px;width:1px;height:19px;background:#d9d9d9"></div>
<div class="a" style="left:292px;top:260px;width:1px;height:19px;background:#d9d9d9"></div>
<div class="a" style="left:388px;top:260px;width:1px;height:19px;background:#d9d9d9"></div>
<div class="a" style="left:608px;top:260px;width:1px;height:19px;background:#d9d9d9"></div>
<div class="a" style="left:788px;top:260px;width:1px;height:19px;background:#d9d9d9"></div>
<div class="a cn" style="left:26px;top:261px;width:91px">241</div>
<div class="a cn" style="left:120px;top:261px;width:170px">14</div>
<div class="a cl" style="left:295px;top:261px;width:93px"><span style="display:inline-block;transform-origin:0 0;transform:scaleX(0.979)">FR-R92R-44</span></div>
<div class="a cl" style="left:391px;top:261px;width:217px"><span style="display:inline-block;transform-origin:0 0;transform:scaleX(1.020)">HL Road Frame - Red, 44</span></div>
<div class="a cl" style="left:611px;top:261px;width:177px"><span style="display:inline-block;transform-origin:0 0;transform:scaleX(1.020)">HL Road Frame</span></div>
<div class="a cl" style="left:791px;top:261px;width:553px"><span style="display:inline-block;transform-origin:0 0;transform:scaleX(1.096)">Our lightest and best quality aluminum frame made from the newest alloy; it is welded and heat-treated for strength.</span></div>
<div class="rh" style="top:280px">14</div>
<div class="a" style="left:26px;top:280px;width:1318px;height:20px;background:#e2efda;border-bottom:1px solid #b2c9a0"></div>
<div class="a cn" style="left:26px;top:281px;width:91px">244</div>
<div class="a cn" style="left:120px;top:281px;width:170px">14</div>
<div class="a cl" style="left:295px;top:281px;width:93px"><span style="display:inline-block;transform-origin:0 0;transform:scaleX(0.979)">FR-R92R-48</span></div>
<div class="a cl" style="left:391px;top:281px;width:217px"><span style="display:inline-block;transform-origin:0 0;transform:scaleX(1.020)">HL Road Frame - Red, 48</span></div>
<div class="a cl" style="left:611px;top:281px;width:177px"><span style="display:inline-block;transform-origin:0 0;transform:scaleX(1.020)">HL Road Frame</span></div>
<div class="a cl" style="left:791px;top:281px;width:553px"><span style="display:inline-block;transform-origin:0 0;transform:scaleX(1.096)">Our lightest and best quality aluminum frame made from the newest alloy; it is welded and heat-treated for strength.</span></div>
<div class="rh" style="top:300px">15</div>
<div class="a" style="left:26px;top:300px;width:1318px;height:20px;background:#fff;border-bottom:1px solid #b2c9a0"></div>
<div class="a" style="left:119px;top:300px;width:1px;height:19px;background:#d9d9d9"></div>
<div class="a" style="left:292px;top:300px;width:1px;height:19px;background:#d9d9d9"></div>
<div class="a" style="left:388px;top:300px;width:1px;height:19px;background:#d9d9d9"></div>
<div class="a" style="left:608px;top:300px;width:1px;height:19px;background:#d9d9d9"></div>
<div class="a" style="left:788px;top:300px;width:1px;height:19px;background:#d9d9d9"></div>
<div class="a cn" style="left:26px;top:301px;width:91px">247</div>
<div class="a cn" style="left:120px;top:301px;width:170px">14</div>
<div class="a cl" style="left:295px;top:301px;width:93px"><span style="display:inline-block;transform-origin:0 0;transform:scaleX(0.979)">FR-R92R-52</span></div>
<div class="a cl" style="left:391px;top:301px;width:217px"><span style="display:inline-block;transform-origin:0 0;transform:scaleX(1.020)">HL Road Frame - Red, 52</span></div>
<div class="a cl" style="left:611px;top:301px;width:177px"><span style="display:inline-block;transform-origin:0 0;transform:scaleX(1.020)">HL Road Frame</span></div>
<div class="a cl" style="left:791px;top:301px;width:553px"><span style="display:inline-block;transform-origin:0 0;transform:scaleX(1.096)">Our lightest and best quality aluminum frame made from the newest alloy; it is welded and heat-treated for strength.</span></div>
<div class="rh" style="top:320px">16</div>
<div class="a" style="left:26px;top:320px;width:1318px;height:20px;background:#e2efda;border-bottom:1px solid #b2c9a0"></div>
<div class="a cn" style="left:26px;top:321px;width:91px">250</div>
<div class="a cn" style="left:120px;top:321px;width:170px">14</div>
<div class="a cl" style="left:295px;top:321px;width:93px"><span style="display:inline-block;transform-origin:0 0;transform:scaleX(0.979)">FR-R92R-56</span></div>
<div class="a cl" style="left:391px;top:321px;width:217px"><span style="display:inline-block;transform-origin:0 0;transform:scaleX(1.020)">HL Road Frame - Red, 56</span></div>
<div class="a cl" style="left:611px;top:321px;width:177px"><span style="display:inline-block;transform-origin:0 0;transform:scaleX(1.020)">HL Road Frame</span></div>
<div class="a cl" style="left:791px;top:321px;width:553px"><span style="display:inline-block;transform-origin:0 0;transform:scaleX(1.096)">Our lightest and best quality aluminum frame made from the newest alloy; it is welded and heat-treated for strength.</span></div>
<div class="rh" style="top:340px">17</div>
<div class="a" style="left:26px;top:340px;width:1318px;height:20px;background:#fff;border-bottom:1px solid #b2c9a0"></div>
<div class="a" style="left:119px;top:340px;width:1px;height:19px;background:#d9d9d9"></div>
<div class="a" style="left:292px;top:340px;width:1px;height:19px;background:#d9d9d9"></div>
<div class="a" style="left:388px;top:340px;width:1px;height:19px;background:#d9d9d9"></div>
<div class="a" style="left:608px;top:340px;width:1px;height:19px;background:#d9d9d9"></div>
<div class="a" style="left:788px;top:340px;width:1px;height:19px;background:#d9d9d9"></div>
<div class="a cn" style="left:26px;top:341px;width:91px">253</div>
<div class="a cn" style="left:120px;top:341px;width:170px">14</div>
<div class="a cl" style="left:295px;top:341px;width:93px"><span style="display:inline-block;transform-origin:0 0;transform:scaleX(0.989)">FR-R38B-58</span></div>
<div class="a cl" style="left:391px;top:341px;width:217px"><span style="display:inline-block;transform-origin:0 0;transform:scaleX(1.017)">LL Road Frame - Black, 58</span></div>
<div class="a cl" style="left:611px;top:341px;width:177px"><span style="display:inline-block;transform-origin:0 0;transform:scaleX(1.010)">LL Road Frame</span></div>
<div class="a cl" style="left:791px;top:341px;width:553px"><span style="display:inline-block;transform-origin:0 0;transform:scaleX(1.082)">The LL Frame provides a safe comfortable ride, while offering superior bump absorption in a value-priced aluminum frame.</span></div>
<div class="rh" style="top:360px">18</div>
<div class="a" style="left:26px;top:360px;width:1318px;height:20px;background:#e2efda;border-bottom:1px solid #b2c9a0"></div>
<div class="a cn" style="left:26px;top:361px;width:91px">256</div>
<div class="a cn" style="left:120px;top:361px;width:170px">14</div>
<div class="a cl" style="left:295px;top:361px;width:93px"><span style="display:inline-block;transform-origin:0 0;transform:scaleX(0.989)">FR-R38B-60</span></div>
<div class="a cl" style="left:391px;top:361px;width:217px"><span style="display:inline-block;transform-origin:0 0;transform:scaleX(1.017)">LL Road Frame - Black, 60</span></div>
<div class="a cl" style="left:611px;top:361px;width:177px"><span style="display:inline-block;transform-origin:0 0;transform:scaleX(1.010)">LL Road Frame</span></div>
<div class="a cl" style="left:791px;top:361px;width:553px"><span style="display:inline-block;transform-origin:0 0;transform:scaleX(1.082)">The LL Frame provides a safe comfortable ride, while offering superior bump absorption in a value-priced aluminum frame.</span></div>
<div class="rh" style="top:380px">19</div>
<div class="a" style="left:26px;top:380px;width:1318px;height:20px;background:#fff;border-bottom:1px solid #b2c9a0"></div>
<div class="a" style="left:119px;top:380px;width:1px;height:19px;background:#d9d9d9"></div>
<div class="a" style="left:292px;top:380px;width:1px;height:19px;background:#d9d9d9"></div>
<div class="a" style="left:388px;top:380px;width:1px;height:19px;background:#d9d9d9"></div>
<div class="a" style="left:608px;top:380px;width:1px;height:19px;background:#d9d9d9"></div>
<div class="a" style="left:788px;top:380px;width:1px;height:19px;background:#d9d9d9"></div>
<div class="a cn" style="left:26px;top:381px;width:91px">259</div>
<div class="a cn" style="left:120px;top:381px;width:170px">14</div>
<div class="a cl" style="left:295px;top:381px;width:93px"><span style="display:inline-block;transform-origin:0 0;transform:scaleX(0.989)">FR-R38B-62</span></div>
<div class="a cl" style="left:391px;top:381px;width:217px"><span style="display:inline-block;transform-origin:0 0;transform:scaleX(1.017)">LL Road Frame - Black, 62</span></div>
<div class="a cl" style="left:611px;top:381px;width:177px"><span style="display:inline-block;transform-origin:0 0;transform:scaleX(1.010)">LL Road Frame</span></div>
<div class="a cl" style="left:791px;top:381px;width:553px"><span style="display:inline-block;transform-origin:0 0;transform:scaleX(1.082)">The LL Frame provides a safe comfortable ride, while offering superior bump absorption in a value-priced aluminum frame.</span></div>
<div class="rh" style="top:400px">20</div>
<div class="a" style="left:26px;top:400px;width:1318px;height:20px;background:#e2efda;border-bottom:1px solid #b2c9a0"></div>
<div class="a cn" style="left:26px;top:401px;width:91px">262</div>
<div class="a cn" style="left:120px;top:401px;width:170px">14</div>
<div class="a cl" style="left:295px;top:401px;width:93px"><span style="display:inline-block;transform-origin:0 0;transform:scaleX(0.979)">FR-R38R-44</span></div>
<div class="a cl" style="left:391px;top:401px;width:217px"><span style="display:inline-block;transform-origin:0 0;transform:scaleX(1.014)">LL Road Frame - Red, 44</span></div>
<div class="a cl" style="left:611px;top:401px;width:177px"><span style="display:inline-block;transform-origin:0 0;transform:scaleX(1.010)">LL Road Frame</span></div>
<div class="a cl" style="left:791px;top:401px;width:553px"><span style="display:inline-block;transform-origin:0 0;transform:scaleX(1.082)">The LL Frame provides a safe comfortable ride, while offering superior bump absorption in a value-priced aluminum frame.</span></div>
<div class="rh" style="top:420px">21</div>
<div class="a" style="left:26px;top:420px;width:1318px;height:20px;background:#fff;border-bottom:1px solid #b2c9a0"></div>
<div class="a" style="left:119px;top:420px;width:1px;height:19px;background:#d9d9d9"></div>
<div class="a" style="left:292px;top:420px;width:1px;height:19px;background:#d9d9d9"></div>
<div class="a" style="left:388px;top:420px;width:1px;height:19px;background:#d9d9d9"></div>
<div class="a" style="left:608px;top:420px;width:1px;height:19px;background:#d9d9d9"></div>
<div class="a" style="left:788px;top:420px;width:1px;height:19px;background:#d9d9d9"></div>
<div class="a cn" style="left:26px;top:421px;width:91px">264</div>
<div class="a cn" style="left:120px;top:421px;width:170px">14</div>
<div class="a cl" style="left:295px;top:421px;width:93px"><span style="display:inline-block;transform-origin:0 0;transform:scaleX(0.979)">FR-R38R-48</span></div>
<div class="a cl" style="left:391px;top:421px;width:217px"><span style="display:inline-block;transform-origin:0 0;transform:scaleX(1.014)">LL Road Frame - Red, 48</span></div>
<div class="a cl" style="left:611px;top:421px;width:177px"><span style="display:inline-block;transform-origin:0 0;transform:scaleX(1.010)">LL Road Frame</span></div>
<div class="a cl" style="left:791px;top:421px;width:553px"><span style="display:inline-block;transform-origin:0 0;transform:scaleX(1.082)">The LL Frame provides a safe comfortable ride, while offering superior bump absorption in a value-priced aluminum frame.</span></div>
<div class="rh" style="top:440px">22</div>
<div class="a" style="left:26px;top:440px;width:1318px;height:20px;background:#e2efda;border-bottom:1px solid #b2c9a0"></div>
<div class="a cn" style="left:26px;top:441px;width:91px">266</div>
<div class="a cn" style="left:120px;top:441px;width:170px">14</div>
<div class="a cl" style="left:295px;top:441px;width:93px"><span style="display:inline-block;transform-origin:0 0;transform:scaleX(0.979)">FR-R38R-52</span></div>
<div class="a cl" style="left:391px;top:441px;width:217px"><span style="display:inline-block;transform-origin:0 0;transform:scaleX(1.014)">LL Road Frame - Red, 52</span></div>
<div class="a cl" style="left:611px;top:441px;width:177px"><span style="display:inline-block;transform-origin:0 0;transform:scaleX(1.010)">LL Road Frame</span></div>
<div class="a cl" style="left:791px;top:441px;width:553px"><span style="display:inline-block;transform-origin:0 0;transform:scaleX(1.082)">The LL Frame provides a safe comfortable ride, while offering superior bump absorption in a value-priced aluminum frame.</span></div>
<div class="rh" style="top:460px">23</div>
<div class="a" style="left:26px;top:460px;width:1318px;height:20px;background:#fff;border-bottom:1px solid #b2c9a0"></div>
<div class="a" style="left:119px;top:460px;width:1px;height:19px;background:#d9d9d9"></div>
<div class="a" style="left:292px;top:460px;width:1px;height:19px;background:#d9d9d9"></div>
<div class="a" style="left:388px;top:460px;width:1px;height:19px;background:#d9d9d9"></div>
<div class="a" style="left:608px;top:460px;width:1px;height:19px;background:#d9d9d9"></div>
<div class="a" style="left:788px;top:460px;width:1px;height:19px;background:#d9d9d9"></div>
<div class="a cn" style="left:26px;top:461px;width:91px">268</div>
<div class="a cn" style="left:120px;top:461px;width:170px">14</div>
<div class="a cl" style="left:295px;top:461px;width:93px"><span style="display:inline-block;transform-origin:0 0;transform:scaleX(0.979)">FR-R38R-58</span></div>
<div class="a cl" style="left:391px;top:461px;width:217px"><span style="display:inline-block;transform-origin:0 0;transform:scaleX(1.014)">LL Road Frame - Red, 58</span></div>
<div class="a cl" style="left:611px;top:461px;width:177px"><span style="display:inline-block;transform-origin:0 0;transform:scaleX(1.010)">LL Road Frame</span></div>
<div class="a cl" style="left:791px;top:461px;width:553px"><span style="display:inline-block;transform-origin:0 0;transform:scaleX(1.082)">The LL Frame provides a safe comfortable ride, while offering superior bump absorption in a value-priced aluminum frame.</span></div>
</div><svg style="left:595px;top:630px;pointer-events:none" width="180" height="85" viewBox="0 0 180 85">
<g fill="none" stroke="rgba(128,128,128,0.34)" stroke-linecap="round">
<circle cx="155.5" cy="38" r="10" stroke-width="8.5"/>
<path d="M36 7 V38 A10 10 0 0 1 20 48 A13 13 0 0 1 13 36" stroke-width="8.5"/>
<path d="M40 45 H146" stroke-width="8.5"/>
<path d="M98 45 V27 M116 45 V27 M132 45 V28" stroke-width="8"/>
</g>
<g fill="rgba(128,128,128,0.34)">
<circle cx="56" cy="11" r="4"/><circle cx="66" cy="15" r="4"/><circle cx="84" cy="19" r="5"/>
<path d="M50 20 C 60 18 75 30 78 45 L 70 48 C 66 36 58 30 50 30Z"/>
</g>
<text x="5" y="75.7" font-family="Liberation Sans" font-weight="bold" font-size="26" fill="rgba(128,128,128,0.34)" textLength="162" lengthAdjust="spacingAndGlyphs">mostaql.com</text>
</svg>
</body></html>
